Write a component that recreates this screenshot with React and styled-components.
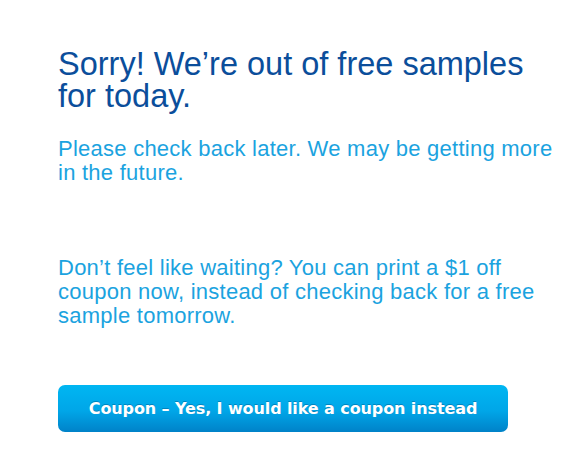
import React from 'react';
import styled, { createGlobalStyle } from 'styled-components';

const GlobalStyle = createGlobalStyle`
   body {
      margin: 0;
      background: #fff;
      font-family: 'Liberation Sans', Arial, sans-serif;
   }
`;

const Page = styled.div`
   padding: 48px 0 0 58px;
   width: 500px;
`;

const Title = styled.h1`
   margin: 0;
   font-size: 32.5px;
   line-height: 32px;
   font-weight: normal;
   color: #0b4e9b;
`;

const Text = styled.p`
   margin: ${(p) => p.$top || 0}px 0 0;
   font-size: 22px;
   line-height: 24px;
   letter-spacing: 0.25px;
   color: #1ba3df;
`;

const CouponButton = styled.button`
   display: block;
   margin-top: 57px;
   width: 450px;
   height: 47px;
   border: none;
   border-radius: 7px;
   background: linear-gradient(to bottom, #00b6f2 0%, #00a6e8 55%, #0082c8 100%);
   color: #fff;
   font-family: 'DejaVu Sans', Verdana, sans-serif;
   font-weight: bold;
   font-size: 16px;
   letter-spacing: -0.1px;
   text-shadow: 0 -1px 0 rgba(0, 70, 120, 0.4);
   cursor: pointer;
`;

const App = () => {
   return (
      <>
         <GlobalStyle />
         <Page>
            <Title>Sorry! We’re out of free samples for today.</Title>
            <Text $top={25}>
               Please check back later. We may be getting more in the future.
            </Text>
            <Text $top={71}>
               Don’t feel like waiting? You can print a $1 off coupon now,
               instead of checking back for a free sample tomorrow.
            </Text>
            <CouponButton>Coupon – Yes, I would like a coupon instead</CouponButton>
         </Page>
      </>
   );
};

export default App;
